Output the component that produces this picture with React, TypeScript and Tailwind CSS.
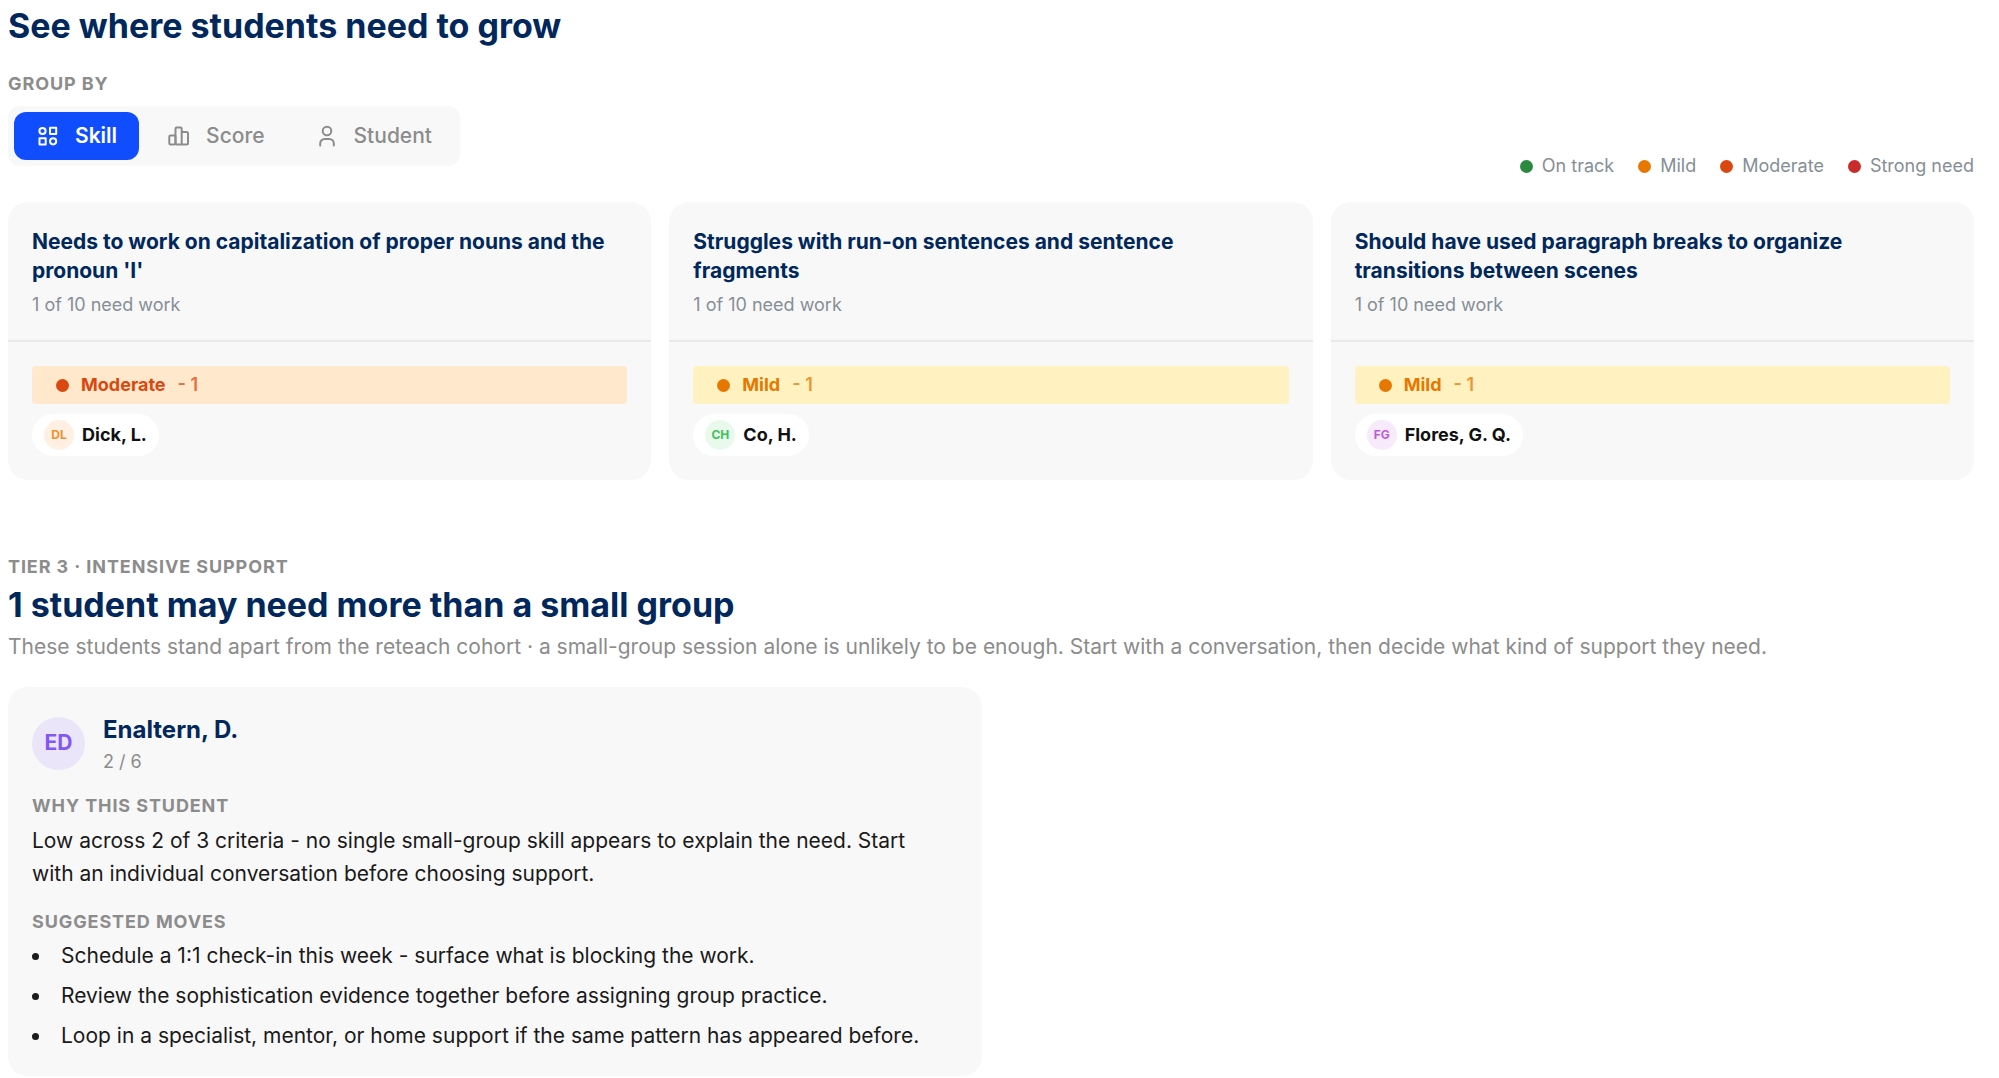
import { useState } from "react";
import type { ReactNode } from "react";

type Severity = "Mild" | "Moderate";

interface SkillGroup {
  title: string;
  summary: string;
  severity: Severity;
  count: number;
  student: { name: string; initials: string; avatar: string };
}

const groups: SkillGroup[] = [
  {
    title: "Needs to work on capitalization of proper nouns and the pronoun 'I'",
    summary: "1 of 10 need work",
    severity: "Moderate",
    count: 1,
    student: { name: "Dick, L.", initials: "DL", avatar: "bg-[#fff0e3] text-[#f0912d]" },
  },
  {
    title: "Struggles with run-on sentences and sentence fragments",
    summary: "1 of 10 need work",
    severity: "Mild",
    count: 1,
    student: { name: "Co, H.", initials: "CH", avatar: "bg-[#e9f9ec] text-[#40bf5a]" },
  },
  {
    title: "Should have used paragraph breaks to organize transitions between scenes",
    summary: "1 of 10 need work",
    severity: "Mild",
    count: 1,
    student: { name: "Flores, G. Q.", initials: "FG", avatar: "bg-[#f6eafb] text-[#bf5ae0]" },
  },
];

const severityStyles: Record<Severity, { bar: string; dot: string }> = {
  Mild: { bar: "bg-[#fff2c0] text-[#e67700]", dot: "bg-[#e67700]" },
  Moderate: { bar: "bg-[#ffe8cc] text-[#d9480f]", dot: "bg-[#d9480f]" },
};

const legend = [
  { label: "On track", dot: "bg-[#2b8a3e]" },
  { label: "Mild", dot: "bg-[#e67700]" },
  { label: "Moderate", dot: "bg-[#d9480f]" },
  { label: "Strong need", dot: "bg-[#c92a2a]" },
];

const moves = [
  "Schedule a 1:1 check-in this week - surface what is blocking the work.",
  "Review the sophistication evidence together before assigning group practice.",
  "Loop in a specialist, mentor, or home support if the same pattern has appeared before.",
];

function Icon({ children }: { children: ReactNode }) {
  return (
    <svg
      className="size-6 shrink-0"
      viewBox="0 0 24 24"
      fill="none"
      stroke="currentColor"
      strokeWidth="2"
      strokeLinecap="round"
      strokeLinejoin="round"
      aria-hidden="true"
    >
      {children}
    </svg>
  );
}

const tabs = [
  {
    label: "Skill",
    icon: (
      <Icon>
        <circle cx="6.5" cy="7" r="3.1" />
        <rect x="14" y="3.8" width="6.2" height="6.2" />
        <rect x="3.5" y="14.2" width="6.2" height="6.2" />
        <circle cx="17.1" cy="17.3" r="3.1" />
      </Icon>
    ),
  },
  {
    label: "Score",
    icon: (
      <Icon>
        <rect x="2.3" y="11.5" width="6.2" height="9" rx="1.3" />
        <rect x="8.5" y="3.5" width="6.2" height="17" rx="1.3" />
        <path d="M14.7 8h4.8a1.5 1.5 0 0 1 1.5 1.5v9.5a1.5 1.5 0 0 1-1.5 1.5h-4.8" />
      </Icon>
    ),
  },
  {
    label: "Student",
    icon: (
      <Icon>
        <circle cx="12" cy="7" r="4.3" />
        <path d="M5.2 21.5v-2a4.500 4.500 0 0 1 4.500-4.500h4.600a4.500 4.500 0 0 1 4.500 4.500v2" />
      </Icon>
    ),
  },
];

function Eyebrow({ children }: { children: ReactNode }) {
  return <p className="text-lg leading-6 font-bold tracking-wider text-[#8c8c8c] uppercase">{children}</p>;
}

function SkillCard({ group }: { group: SkillGroup }) {
  const style = severityStyles[group.severity];

  return (
    <article className="rounded-[20px] bg-[#f8f8f8]">
      <div className="border-b-2 border-[#e9e9e9] px-6 pt-[25px] pb-[23px]">
        <h3 className="pr-3 text-[21px] leading-[29px] font-bold text-[#00285c]">{group.title}</h3>
        <p className="mt-2 text-lg leading-6 text-[#868e96]">{group.summary}</p>
      </div>
      <div className="flex flex-col items-start gap-2.5 p-6">
        <div className={`flex w-full items-center rounded px-6 py-1.5 text-lg leading-[26px] font-bold ${style.bar}`}>
          <span className={`mr-3 size-[13px] rounded-full ${style.dot}`} />
          {group.severity}
          <span className="ml-3 font-semibold opacity-75">- {group.count}</span>
        </div>
        <div className="flex items-center gap-2 rounded-full bg-white px-3 py-1.5">
          <span className={`flex size-[30px] items-center justify-center rounded-full text-xs font-bold ${group.student.avatar}`}>
            {group.student.initials}
          </span>
          <span className="text-lg leading-6 font-bold text-[#111111]">{group.student.name}</span>
        </div>
      </div>
    </article>
  );
}

export default function App() {
  const [active, setActive] = useState("Skill");

  return (
    <main className="bg-white pt-2 pr-[25px] pl-2 font-[Inter,sans-serif]">
      <section>
        <h2 className="text-[34px] leading-9 font-bold text-[#00285c]">See where students need to grow</h2>
        <div className="mt-7">
          <Eyebrow>Group by</Eyebrow>
        </div>
        <div className="mt-[10px] flex items-end justify-between">
          <div className="flex gap-1.5 rounded-xl bg-[#f8f8f8] p-1.5">
            {tabs.map((tab) => (
              <button
                key={tab.label}
                type="button"
                aria-pressed={active === tab.label}
                onClick={() => setActive(tab.label)}
                className={`flex h-12 items-center gap-[15px] rounded-xl px-[22px] text-[21px] ${
                  active === tab.label ? "bg-[#0f4dff] font-semibold text-white" : "font-medium text-[#8c8c8c]"
                }`}
              >
                {tab.icon}
                {tab.label}
              </button>
            ))}
          </div>
          <ul className="-mb-3 flex gap-6">
            {legend.map((item) => (
              <li key={item.label} className="flex items-center gap-[9px] text-lg leading-6 text-[#868e96]">
                <span className={`size-[13px] rounded-full ${item.dot}`} />
                {item.label}
              </li>
            ))}
          </ul>
        </div>
        <div className="mt-9 grid grid-cols-3 gap-[18px]">
          {groups.map((group) => (
            <SkillCard key={group.title} group={group} />
          ))}
        </div>
      </section>

      <section className="mt-[75px]">
        <Eyebrow>Tier 3 · Intensive support</Eyebrow>
        <h2 className="mt-2 text-[34px] leading-9 font-bold text-[#00285c]">
          1 student may need more than a small group
        </h2>
        <p className="mt-2 text-[21px] leading-8 text-[#8c8c8c]">
          These students stand apart from the reteach cohort · a small-group session alone is unlikely to be enough.
          Start with a conversation, then decide what kind of support they need.
        </p>

        <div className="mt-6 grid grid-cols-2 gap-[18px]">
          <article className="rounded-[20px] bg-[#f8f8f8] py-6 pr-9 pl-6">
            <div className="flex items-center gap-[18px]">
              <span className="flex size-[53px] items-center justify-center rounded-full bg-[#eae5f8] text-[21px] font-bold text-[#8257f5]">
                ED
              </span>
              <div>
                <h3 className="text-2xl leading-[38px] font-bold text-[#00285c]">Enaltern, D.</h3>
                <p className="text-lg leading-[26px] text-[#8c8c8c]">2 / 6</p>
              </div>
            </div>
            <div className="mt-[19px]">
              <Eyebrow>Why this student</Eyebrow>
              <p className="mt-1.5 text-[21px] leading-[33px] text-[#1a1a1a]">
                Low across 2 of 3 criteria - no single small-group skill appears to explain the need. Start with an
                individual conversation before choosing support.
              </p>
            </div>
            <div className="mt-5">
              <Eyebrow>Suggested moves</Eyebrow>
              <ul className="mt-1.5 flex flex-col gap-2 text-[21px] leading-8 text-[#1a1a1a]">
                {moves.map((move) => (
                  <li key={move} className="flex gap-[22px]">
                    <span className="mt-[13px] size-[7px] shrink-0 rounded-full bg-current" />
                    {move}
                  </li>
                ))}
              </ul>
            </div>
          </article>
        </div>
      </section>
    </main>
  );
}
